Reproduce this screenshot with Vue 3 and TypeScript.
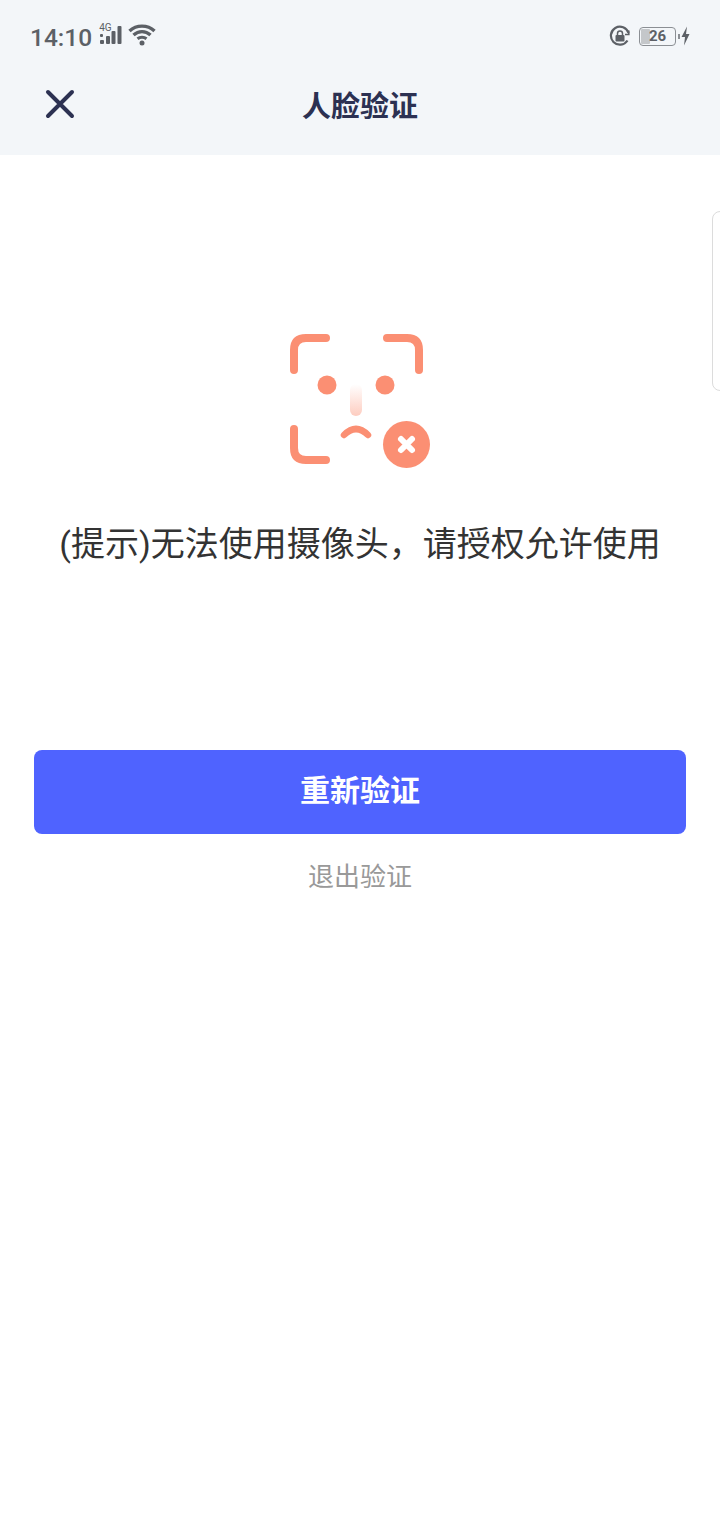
<script setup lang="ts">
// static screen, no state needed
</script>

<template>
  <div class="page">
    <header class="top">
      <div class="status">
        <div class="status-left">
          <span class="time">14:10</span>
          <div class="signal">
            <span class="net">4G</span>
            <svg width="24" height="22" viewBox="0 0 24 22">
              <rect x="1" y="15" width="4" height="4" rx="1" />
              <rect x="1" y="9" width="3" height="3" rx="1" />
              <rect x="7" y="11" width="4" height="8" rx="1" />
              <rect x="12.500" y="6" width="4" height="13" rx="1" />
              <rect x="18.500" y="1" width="4" height="18" rx="1" />
            </svg>
          </div>
          <svg class="wifi" width="28" height="24" viewBox="0 0 28 24" fill="none">
            <path d="M1.500 8C8.500 1.500 19.500 1.500 26.500 8" stroke-width="3.400" />
            <path d="M5.500 12C10.500 7.500 17.500 7.500 22.500 12" stroke-width="3.400" />
            <path d="M9.500 15.800C12 14 16 14 18.500 15.800" stroke-width="3.200" />
            <circle cx="14" cy="20" r="2.500" class="wifi-dot" />
          </svg>
        </div>
        <div class="status-right">
          <svg class="lock" width="22" height="22" viewBox="0 0 22 22" fill="none">
            <path d="M18.500 15.500A9 9 0 1 1 19.500 8" stroke-width="2.200" />
            <path d="M19.800 5.500V9.500H16" stroke-width="1.600" />
            <rect x="6.500" y="10" width="9" height="6.500" rx="1" class="lock-body" />
            <path d="M8.500 10V8.500a2.500 2.500 0 0 1 5 0V10" stroke-width="1.500" />
          </svg>
          <div class="battery">
            <span class="level"></span>
            <span class="percent">26</span>
          </div>
          <span class="battery-cap"></span>
          <svg class="bolt" width="9" height="20" viewBox="0 0 9 20">
            <path d="M6 0.500 0.500 11H4L3 19.500 8.500 8H5Z" />
          </svg>
        </div>
      </div>
      <nav class="nav">
        <button class="close" type="button" aria-label="关闭">
          <svg width="30" height="30" viewBox="0 0 30 30" fill="none">
            <path d="M3 3 27 27M27 3 3 27" />
          </svg>
        </button>
        <h1 class="title">人脸验证</h1>
      </nav>
    </header>

    <main class="content">
      <svg class="face" width="150" height="140" viewBox="285 330 150 140" fill="none">
        <defs>
          <linearGradient id="nose" x1="0" y1="0" x2="0" y2="1">
            <stop offset="0" stop-color="#fb8f73" stop-opacity="0" />
            <stop offset="1" stop-color="#fb8f73" stop-opacity="0.45" />
          </linearGradient>
        </defs>
        <g class="frame">
          <path d="M294 370V350Q294 338 306 338H326" />
          <path d="M387 338H407Q419 338 419 350V370" />
          <path d="M294 429V448Q294 460 306 460H326" />
        </g>
        <circle cx="327" cy="385" r="9.500" fill="#fb8f73" />
        <circle cx="385" cy="385" r="9.500" fill="#fb8f73" />
        <rect x="350" y="384" width="12" height="32" rx="6" fill="url(#nose)" />
        <path class="mouth" d="M344 435Q356 423 368 435" />
        <circle cx="406.500" cy="444.500" r="23.500" fill="#fb8f73" />
        <path class="cross" d="M401 439 412 450M412 439 401 450" />
      </svg>
      <p class="tip">(提示)无法使用摄像头，请授权允许使用</p>
      <button class="retry" type="button">重新验证</button>
      <a class="quit">退出验证</a>
    </main>

    <div class="side-handle"></div>
  </div>
</template>

<style scoped>
.page {
  position: relative;
  width: 720px;
  min-height: 1520px;
  background: #fff;
  overflow: hidden;
  font-family: Roboto, "Noto Sans CJK SC", sans-serif;
}

.top {
  height: 155px;
  background: #f3f6f9;
}

.status {
  height: 72px;
  padding: 2px 30px 0;
  box-sizing: border-box;
  display: flex;
  justify-content: space-between;
  align-items: center;
  color: #5c6066;
}

.status-left,
.status-right {
  display: flex;
  align-items: center;
}

.time {
  font-size: 24.500px;
  font-weight: 500;
}

.signal {
  position: relative;
  margin-left: 7px;
  width: 24px;
  height: 22px;
  margin-top: -3px;
}

.signal svg {
  fill: #5c6066;
  display: block;
}

.net {
  position: absolute;
  left: 0;
  top: -3px;
  font-size: 10px;
  line-height: 12px;
}

.wifi {
  margin-left: 5px;
  margin-top: -4px;
  stroke: #5c6066;
}

.wifi-dot {
  fill: #5c6066;
  stroke: none;
}

.status-right {
  margin-top: -2px;
}

.lock {
  stroke: #5c6066;
  margin-right: 8px;
}

.lock-body {
  fill: #5c6066;
  stroke: none;
}

.battery {
  position: relative;
  width: 37px;
  height: 19px;
  box-sizing: border-box;
  border: 1.500px solid #8b8f94;
  border-radius: 4px;
  display: flex;
  align-items: center;
  justify-content: center;
}

.level {
  position: absolute;
  left: 1px;
  top: 1px;
  bottom: 1px;
  width: 9px;
  background: #c4c7ca;
  border-radius: 1px;
}

.percent {
  position: relative;
  font-size: 15px;
  font-weight: 700;
  color: #5c6066;
}

.battery-cap {
  width: 2px;
  height: 5px;
  margin-left: 2px;
  background: #8b8f94;
}

.bolt {
  fill: #5c6066;
  margin-left: 1px;
}

.nav {
  position: relative;
  height: 67px;
  display: flex;
  align-items: center;
  justify-content: center;
}

.close {
  position: absolute;
  left: 45px;
  top: 17px;
  width: 30px;
  height: 30px;
  padding: 0;
  border: none;
  background: none;
}

.close svg {
  display: block;
  stroke: #2c3152;
  stroke-width: 4;
  stroke-linecap: round;
}

.title {
  margin: 0 0 4px;
  font-size: 29px;
  font-weight: 700;
  color: #2c3152;
}

.content {
  display: flex;
  flex-direction: column;
  align-items: center;
  padding: 175px 34px 0;
}

.face {
  display: block;
}

.frame path {
  stroke: #fb8f73;
  stroke-width: 8;
  stroke-linecap: round;
}

.mouth {
  stroke: #fb8f73;
  stroke-width: 6.500;
  stroke-linecap: round;
}

.cross {
  stroke: #fff;
  stroke-width: 6;
  stroke-linecap: round;
}

.tip {
  margin: 50px 0 0;
  font-size: 34px;
  line-height: 48px;
  color: #333;
  white-space: nowrap;
}

.retry {
  margin-top: 182px;
  width: 100%;
  height: 84px;
  padding: 0 0 9px;
  border: none;
  border-radius: 8px;
  background: #4f63ff;
  color: #fff;
  font-family: inherit;
  font-size: 30px;
  font-weight: 700;
}

.quit {
  margin-top: 24px;
  font-size: 26px;
  line-height: 38px;
  color: #999;
}

.side-handle {
  position: absolute;
  left: 712px;
  top: 211px;
  width: 20px;
  height: 180px;
  box-sizing: border-box;
  border: 1px solid #dcdcdc;
  border-radius: 8px;
}
</style>
